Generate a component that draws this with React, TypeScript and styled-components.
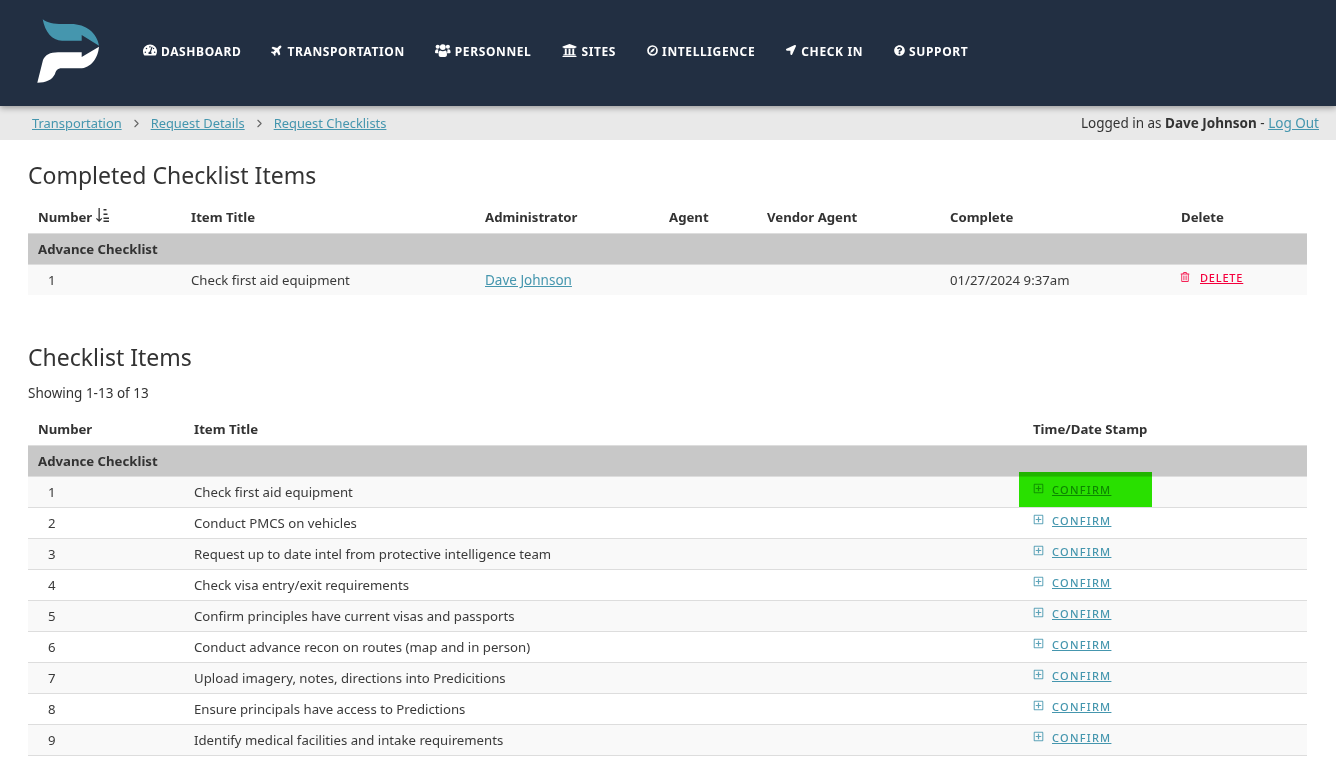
import React from "react";
import styled, { createGlobalStyle } from "styled-components";
import { ChevronRight } from "lucide-react";
import { FaTachometerAlt, FaPlane, FaUniversity, FaLocationArrow, FaQuestionCircle, FaRegPlusSquare, FaRegTrashAlt } from "react-icons/fa";

const Global = createGlobalStyle`
  html, body { margin: 0; padding: 0; height: 758px; overflow: hidden; background: #fff; }
  body { font-family: "Noto Sans", "Open Sans", sans-serif; font-size: 13.5px; color: #333; }
  * { box-sizing: border-box; }
`;
const Header = styled.header`
  height: 106px; background: #222f42; display: flex; align-items: center; padding-left: 37px;
  box-shadow: 0 2px 6px rgba(0,0,0,.35); position: relative; z-index: 1;
`;
const Logo = styled.svg`width: 63px; height: 64px; flex: none; margin-top: -4px;`;
const Nav = styled.nav`display: flex; gap: 30px; margin-left: 43px; margin-top: -4px;`;
const NavItem = styled.a`
  display: flex; align-items: center; gap: 4px; color: #fff; font-size: 12px; font-weight: 700; letter-spacing: .62px; white-space: nowrap;
`;
const NavIcon = styled.span<{ $w: number; $size: number; $rot?: number }>`
  width: ${p => p.$w}px; display: flex; justify-content: center;
  svg { font-size: ${p => p.$size}px; margin-top: -2px; transform: rotate(${p => p.$rot || 0}deg); }
`;
const Crumbs = styled.div`
  height: 34px; background: #e9e9e9; display: flex; align-items: center; justify-content: space-between; padding: 0 17px 0 32px;
`;
const CrumbList = styled.div`display: flex; align-items: center; font-size: 12.9px;`;
const Link = styled.a`color: #4596ae; text-decoration: underline;`;
const Sep = styled.span`width: 29px; display: flex; justify-content: center; color: #666;`;
const Main = styled.main`padding: 0 29px 0 28px;`;
const Title = styled.h2<{ $top: number }>`font-size: 23px; font-weight: 400; line-height: 30px; margin: ${p => p.$top}px 0 0; color: #333;`;
const Showing = styled.div`line-height: 20px; margin-top: 11px;`;
const Table = styled.table<{ $top: number }>`
  width: 100%; border-collapse: collapse; table-layout: fixed; margin-top: ${p => p.$top}px;
`;
const Th = styled.th<{ $w?: number }>`
  text-align: left; font-weight: 700; padding: 0 10px; height: 32px; font-size: 13.2px; white-space: nowrap;
  ${p => p.$w ? `width: ${p.$w}px;` : ""}
`;
const SortIcon = styled.svg`width: 14px; height: 15px; margin-left: 3px; vertical-align: -1px;`;
const GroupRow = styled.tr`background: #c8c8c8; border-top: 1px solid #ddd; border-bottom: 1px solid #ddd;`;
const GroupCell = styled.td`font-weight: 700; padding: 0 10px; height: 31px; font-size: 13.2px;`;
const Row = styled.tr<{ $alt: boolean; $line: boolean }>`
  background: ${p => p.$alt ? "#f9f9f9" : "#fff"};
  ${p => p.$line ? "border-bottom: 1px solid #ddd;" : ""}
`;
const Td = styled.td`padding: 0 10px; height: 31px; white-space: nowrap; color: #3a3a3a; font-size: 13.2px;`;
const NameTd = styled(Td)`font-size: 13.5px;`;
const NumTd = styled(Td)`padding-left: 20px;`;
const ActionLink = styled.a<{ $red?: boolean }>`
  display: inline-flex; align-items: center; font-size: 11px; font-weight: 500; position: relative; top: -3px;
  letter-spacing: ${p => p.$red ? ".8px" : "1.25px"};
  margin-left: ${p => p.$red ? "-1px" : "0"};
  color: ${p => p.$red ? "#f5003d" : "#4596ae"};
  span { text-decoration: underline; }
  svg { font-size: ${p => p.$red ? "10px" : "11px"}; margin-right: ${p => p.$red ? "10px" : "8px"}; margin-top: -2px; opacity: .85; }
`;
const Highlight = styled.div`
  position: absolute; left: 1019px; top: 472px; width: 133px; height: 35px; background: #2ae600; mix-blend-mode: multiply; z-index: 2;
`;

const UsersIcon = () => (
  <svg width="1.2em" height="1em" viewBox="0 0 15 12.5" fill="currentColor">
    <circle cx="2.6" cy="2.6" r="2" /><circle cx="12.4" cy="2.6" r="2" /><circle cx="7.5" cy="3" r="2.8" />
    <path d="M0 8.2C0 6 .8 5 2 5c.4 0 .8.2 1.2.4C3 6 3 7.5 3.5 8.8H1C.4 8.8 0 8.6 0 8.2Z" />
    <path d="M15 8.2C15 6 14.2 5 13 5c-.4 0-.8.2-1.2.4.2.6.2 2.1-.3 3.4H14c.6 0 1-.2 1-.6Z" />
    <path d="M5 6.2c.6.5 1.5.8 2.5.8s1.900-.3 2.500-.8c1 0 1.500 1.300 1.500 4 0 1.200-.6 2.300-2 2.300h-4c-1.400 0-2-1.100-2-2.300 0-2.700.5-4 1.500-4Z" />
  </svg>
);
const RingIcon = () => (
  <svg width="1em" height="1em" viewBox="0 0 11 11" fill="none" stroke="currentColor">
    <circle cx="5.5" cy="5.5" r="4.5" strokeWidth="1.7" />
    <path d="M3.500 7.500C3.800 5.500 5.500 3.800 7.500 3.500C7.200 5.500 5.500 7.200 3.500 7.500Z" fill="currentColor" strokeWidth=".4" />
  </svg>
);
const nav: [React.ComponentType, string, number, number, number?][] = [
  [FaTachometerAlt, "DASHBOARD", 14, 14], [FaPlane, "TRANSPORTATION", 12, 12, -45], [UsersIcon, "PERSONNEL", 16, 13], [FaUniversity, "SITES", 16, 15],
  [RingIcon, "INTELLIGENCE", 12, 11], [FaLocationArrow, "CHECK IN", 12, 10], [FaQuestionCircle, "SUPPORT", 12, 11],
];
const items = [
  "Check first aid equipment", "Conduct PMCS on vehicles", "Request up to date intel from protective intelligence team",
  "Check visa entry/exit requirements", "Confirm principles have current visas and passports",
  "Conduct advance recon on routes (map and in person)", "Upload imagery, notes, directions into Predicitions",
  "Ensure principals have access to Predictions", "Identify medical facilities and intake requirements",
];

export default function App() {
  return (
    <>
      <Global />
      <Header>
        <Logo viewBox="37 19 63 64">
          <path fill="#4596ae" d="M42.7 19.300C47 23 54 24 62 24H71C86 24 97 33 99 45.700L81.700 35V40.700H62C52 40.700 45 32 42.700 19.300Z" />
          <path fill="#fff" d="M37.300 82.700L43 60C45 55 50 52.300 58 52.300H81.700V57L99 46.700C98 58 91 68.300 80 68.300H62C57 68.300 56 71 55 74C52 80 46 82.700 37.300 82.700Z" />
        </Logo>
        <Nav>
          {nav.map(([I, t, w, s, r]) => <NavItem key={t}><NavIcon $w={w} $size={s} $rot={r}><I /></NavIcon>{t}</NavItem>)}
        </Nav>
      </Header>
      <Crumbs>
        <CrumbList>
          <Link>Transportation</Link><Sep><ChevronRight size={13} strokeWidth={2} /></Sep><Link>Request Details</Link><Sep><ChevronRight size={13} strokeWidth={2} /></Sep><Link>Request Checklists</Link>
        </CrumbList>
        <div>Logged in as <b>Dave Johnson</b> - <Link>Log Out</Link></div>
      </Crumbs>
      <Main>
        <Title $top={20}>Completed Checklist Items</Title>
        <Table $top={11}>
          <thead>
            <tr>
              <Th $w={153}>Number
                <SortIcon viewBox="0 0 14 15" fill="currentColor">
                  <path d="M3.500 0h1.300v11.500L6.500 10l.7.700L4.150 14 1 10.700l.7-.700 1.800 1.500Z" />
                  <path d="M8.500 1h3v1.600h-3ZM8.500 5.500h4v1.600h-4ZM8.500 9.500h5.500v1.600H8.500ZM8.500 12.400h5.500V14H8.500Z" />
                </SortIcon>
              </Th>
              <Th $w={294}>Item Title</Th><Th $w={184}>Administrator</Th>
              <Th $w={98}>Agent</Th><Th $w={183}>Vendor Agent</Th><Th $w={231}>Complete</Th><Th>Delete</Th>
            </tr>
          </thead>
          <tbody>
            <GroupRow><GroupCell colSpan={7}>Advance Checklist</GroupCell></GroupRow>
            <Row $alt $line={false}>
              <NumTd>1</NumTd><Td>Check first aid equipment</Td><NameTd><Link>Dave Johnson</Link></NameTd><Td /><Td />
              <Td>01/27/2024 9:37am</Td>
              <Td><ActionLink $red><FaRegTrashAlt /><span>DELETE</span></ActionLink></Td>
            </Row>
          </tbody>
        </Table>
        <Title $top={47}>Checklist Items</Title>
        <Showing>Showing 1-13 of 13</Showing>
        <Table $top={10}>
          <thead>
            <tr><Th $w={156}>Number</Th><Th $w={839}>Item Title</Th><Th>Time/Date Stamp</Th></tr>
          </thead>
          <tbody>
            <GroupRow><GroupCell colSpan={3}>Advance Checklist</GroupCell></GroupRow>
            {items.map((t, i) => (
              <Row key={t} $alt={i % 2 === 0} $line>
                <NumTd>{i + 1}</NumTd><Td>{t}</Td>
                <Td><ActionLink><FaRegPlusSquare /><span>CONFIRM</span></ActionLink></Td>
              </Row>
            ))}
          </tbody>
        </Table>
      </Main>
      <Highlight />
    </>
  );
}
